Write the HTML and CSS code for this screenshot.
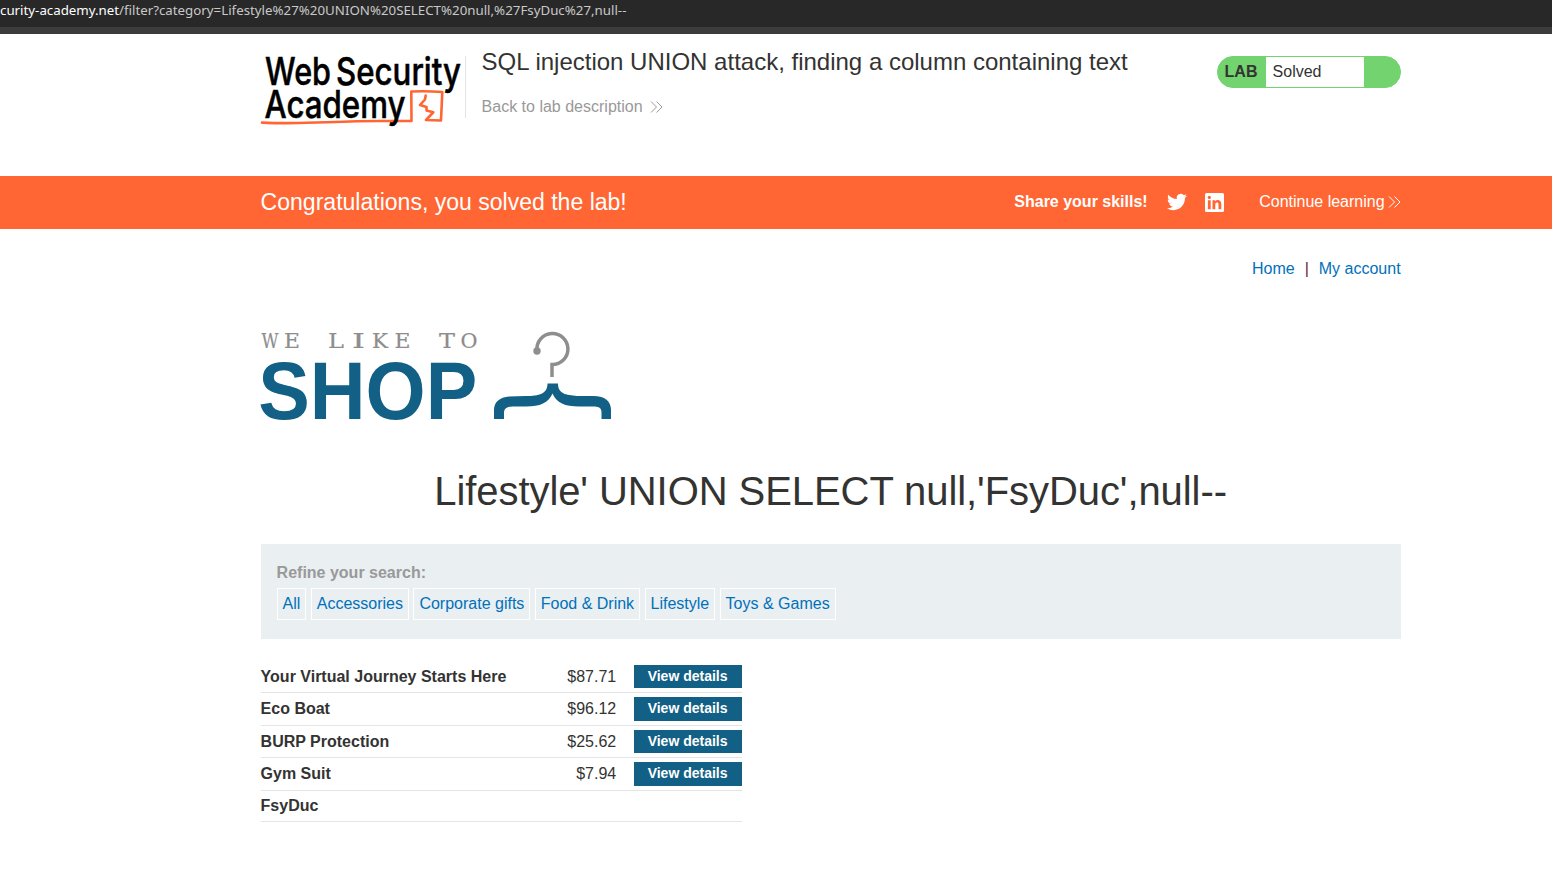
FILE: index.html
```html
<!DOCTYPE html>
<html lang="en">
<head>
<meta charset="utf-8">
<title>SQL injection UNION attack, finding a column containing text</title>
<link rel="stylesheet" href="styles.css">
</head>
<body>
<div class="browser-bar"><span class="url-host">curity-academy.net</span><span class="url-path">/filter?category=Lifestyle%27%20UNION%20SELECT%20null,%27FsyDuc%27,null--</span></div>
<header class="lab-header container">
  <svg class="academy-logo" width="204" height="76" viewBox="0 0 204 76">
    <g class="academy-name">
      <text x="4" y="29" textLength="66" lengthAdjust="spacingAndGlyphs">Web</text>
      <text x="75" y="29" textLength="125" lengthAdjust="spacingAndGlyphs">Security</text>
    </g>
    <path class="logo-line" d="M1 66.600Q28 67.800 66 66.300T124 65L150.500 65L150.300 35.500Q166 34.800 181.300 36L180 64.500L165 64L172.300 56.300L165.500 54.500V51L159 49L164 43.500L164.700 39.500"/>
    <g class="academy-name"><text x="3.500" y="61.500" textLength="141" lengthAdjust="spacingAndGlyphs">Academy</text></g>
  </svg>
  <div class="lab-title">
    <h2>SQL injection UNION attack, finding a column containing text</h2>
    <a class="back-link">Back to lab description
      <svg width="13" height="12" viewBox="0 0 13 12"><path d="M1 .5l5.500 5.500L1 11.500M6.500 .5L12 6l-5.500 5.500"/></svg>
    </a>
  </div>
  <div class="lab-status"><span class="lab-tag">LAB</span><span class="lab-state">Solved</span></div>
</header>
<section class="solved-banner">
  <div class="container banner-row">
    <h4>Congratulations, you solved the lab!</h4>
    <span class="share">Share your skills!</span>
    <svg class="twitter" width="20" height="20" viewBox="0 0 24 24"><path d="M23.950 4.570a10 10 0 0 1-2.820.77 4.960 4.960 0 0 0 2.160-2.720c-.95.56-2 .96-3.130 1.180a4.920 4.920 0 0 0-8.380 4.480C7.690 8.100 4.070 6.130 1.640 3.160a4.820 4.820 0 0 0-.67 2.480c0 1.700.87 3.200 2.190 4.080a4.900 4.900 0 0 1-2.230-.61v.06a4.920 4.920 0 0 0 3.950 4.820 5 5 0 0 1-2.210.09 4.940 4.940 0 0 0 4.600 3.420A9.870 9.870 0 0 1 0 19.540a13.990 13.990 0 0 0 7.550 2.210c9.050 0 14-7.500 14-13.980 0-.21 0-.42-.02-.63a9.940 9.940 0 0 0 2.420-2.570z"/></svg>
    <svg class="linkedin" width="19" height="19" viewBox="0 0 19 19"><rect width="19" height="19" rx="1.500"/><g class="linkedin-mark"><circle cx="4.300" cy="4.400" r="1.600"/><path d="M2.900 7.200h2.800v9H2.900zM7.500 7.200h2.700v1.300c1.400-2.400 6.100-2 6.100 2.400v5.300h-2.800v-4.700c0-2.700-3.200-2.500-3.200 0v4.700H7.500z"/></g></svg>
    <a class="continue">Continue learning <svg width="13" height="12" viewBox="0 0 13 12"><path d="M1 .5l5.500 5.500L1 11.500M6.500 .5L12 6l-5.500 5.500"/></svg></a>
  </div>
</section>
<main class="container">
  <nav class="top-links"><a>Home</a><span>|</span><a>My account</a></nav>
  <svg class="shop-logo" width="352" height="92" viewBox="0 0 352 92">
    <text class="shop-tagline" y="16.500"><tspan x="0.500" textLength="17" lengthAdjust="spacingAndGlyphs">W</tspan><tspan x="23" textLength="16" lengthAdjust="spacingAndGlyphs">E</tspan> <tspan x="67" textLength="16" lengthAdjust="spacingAndGlyphs">L</tspan><tspan x="91" textLength="13" lengthAdjust="spacingAndGlyphs">I</tspan><tspan x="111" textLength="16" lengthAdjust="spacingAndGlyphs">K</tspan><tspan x="133.500" textLength="16" lengthAdjust="spacingAndGlyphs">E</tspan> <tspan x="178" textLength="16" lengthAdjust="spacingAndGlyphs">T</tspan><tspan x="199.500" textLength="17" lengthAdjust="spacingAndGlyphs">O</tspan></text>
    <text class="shop-word" x="-2.800" y="87.500" textLength="219" lengthAdjust="spacingAndGlyphs">SHOP</text>
    <path class="hook" d="M276 19.500A15.500 15.500 0 1 1 291 33.500V46"/>
    <circle class="hook-end" cx="276" cy="20" r="3.700"/>
    <path class="hanger" d="M286.500 52.500H297C297 63 305 64 316 65L332 65C345 65 350 71 350 79V88H340.500V81C340.500 76.500 337 75.500 332 75.500H318C304 75.500 295.500 72 291.500 62.500C287.500 72 279 75.500 265 75.500L253 75.500C246 75.500 243 77 243 82V88H233V79C233 71 239 66 248 65.500L265 65C278 65 286.500 63 286.500 52.500Z"/>
  </svg>
  <h1>Lifestyle' UNION SELECT null,'FsyDuc',null--</h1>
  <section class="filters">
    <label>Refine your search:</label>
    <div class="filter-list"><a>All</a><a>Accessories</a><a>Corporate gifts</a><a>Food &amp; Drink</a><a>Lifestyle</a><a>Toys &amp; Games</a></div>
  </section>
  <div class="products">
    <div class="product"><b>Your Virtual Journey Starts Here</b><span>$87.71</span><a>View details</a></div>
    <div class="product"><b>Eco Boat</b><span>$96.12</span><a>View details</a></div>
    <div class="product"><b>BURP Protection</b><span>$25.62</span><a>View details</a></div>
    <div class="product"><b>Gym Suit</b><span>$7.94</span><a>View details</a></div>
    <div class="product last"><b>FsyDuc</b></div>
  </div>
</main>
</body>
</html>
```
FILE: styles.css
```css
* { box-sizing: border-box; }
body { margin: 0; height: 895px; overflow: hidden; background: #fff; color: #333332; font: 16px/20px "Liberation Sans", Arial, sans-serif; }
h1, h2, h4 { margin: 0; font-weight: 400; }
svg { display: block; flex: none; }
.container { width: 1140px; margin-left: 260.600px; }
.browser-bar { height: 34px; background: #282828; border-bottom: 7px solid #3c3c3c; font: 13.300px/20px "Noto Sans", sans-serif; white-space: nowrap; color: #c8c8c8; }
.url-host { color: #fff; display: inline-block; width: 119px; }
.lab-header { height: 142px; display: flex; align-items: flex-start; padding-top: 22px; }
.academy-logo { overflow: visible; }
.academy-name { font: 500 38px Inter, sans-serif; fill: #000; stroke: #000; stroke-width: .5; }
.logo-line { fill: none; stroke: #ff6633; stroke-width: 2.600; stroke-linejoin: round; stroke-linecap: round; }
.lab-title { border-left: 1px solid #e4e4e4; height: 62px; padding-left: 16px; flex: 1; }
.lab-title h2 { font-size: 24px; line-height: 28px; margin-top: -8px; }
.back-link { display: flex; align-items: center; gap: 7px; color: #999; margin-top: 21px; }
.back-link path, .continue path { fill: none; stroke: currentColor; stroke-width: 1; }
.lab-status { width: 184px; height: 32px; border: 1px solid #72d36f; border-radius: 16px; background: #72d36f; display: flex; line-height: 30px; overflow: hidden; }
.lab-tag { width: 48px; padding-left: 7px; font-weight: 700; }
.lab-state { width: 98px; padding-left: 7px; background: #fff; }
.solved-banner { height: 53px; background: #ff6633; color: #fff; }
.banner-row { height: 52px; display: flex; align-items: center; }
.banner-row h4 { font-size: 23.040px; flex: 1; }
.share { font-weight: 700; margin-right: 19px; }
.twitter { fill: #fff; margin-right: 18.500px; }
.linkedin { fill: #fff; margin-right: 35px; }
.linkedin-mark { fill: #ff6633; }
.continue { display: flex; align-items: center; gap: 3px; }
.top-links { display: flex; justify-content: flex-end; gap: 10px; padding-top: 30px; height: 102px; }
.top-links a, .filter-list a { color: #0071ba; }
.top-links span { color: #681d3e; }
.shop-logo { overflow: visible; }
.shop-tagline { font: 20px "DejaVu Serif", serif; fill: #8d8d8d; stroke: #8d8d8d; stroke-width: .2; }
.shop-word { font: 700 82px "Liberation Sans", sans-serif; fill: #126085; }
.hook { fill: none; stroke: #8e8e8e; stroke-width: 3.500; }
.hook-end { fill: #8e8e8e; }
.hanger { fill: #126085; }
h1 { font-size: 40px; line-height: 48px; letter-spacing: -.07px; text-align: center; margin-top: 44px; }
.filters { height: 95px; margin-top: 29px; padding: 19px 16px; background: #eaeff2; }
.filters label { display: block; color: #999; font-weight: 700; }
.filter-list { display: flex; gap: 4.400px; margin-top: 5px; }
.filter-list a { height: 32px; padding: 0 5px; border: 1px solid #fff; line-height: 30px; }
.products { width: 481px; margin-top: 21.800px; }
.product { height: 32.500px; display: flex; align-items: center; border-bottom: 1px solid #e4e4e4; }
.product b { flex: 1; }
.product span { margin-right: 17.400px; }
.product a { width: 108px; height: 23.400px; background: #126085; color: #fff; font: 700 14px/23.400px "Liberation Sans", Arial, sans-serif; text-align: center; }
.product.last { height: 31.200px; }
```
